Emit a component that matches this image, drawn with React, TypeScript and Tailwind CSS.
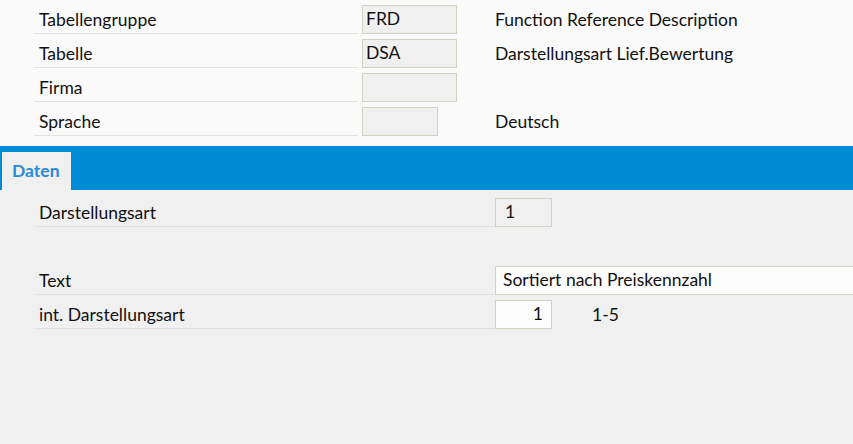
import React from "react"

const font = { fontFamily: "Lato, 'Open Sans', sans-serif" }

interface HeadRow {
  label: string
  value: string
  desc: string
  narrow?: boolean
}

const headRows: HeadRow[] = [
  { label: "Tabellengruppe", value: "FRD", desc: "Function Reference Description" },
  { label: "Tabelle", value: "DSA", desc: "Darstellungsart Lief.Bewertung" },
  { label: "Firma", value: "", desc: "" },
  { label: "Sprache", value: "", desc: "Deutsch", narrow: true },
]

function HeadLine({ row }: { row: HeadRow }) {
  return (
    <div className="flex h-[34px] items-stretch">
      <div className="w-[324px] border-b border-[#e2e2da] pl-[5px] flex items-center pt-[7px]">{row.label}</div>
      <div
        className={`ml-[4px] mt-[5px] h-[29px] border border-[#d2d2c2] bg-[#f0f0f0] pl-[3px] flex items-center ${
          row.narrow ? "w-[76px]" : "w-[95px]"
        }`}
      >
        {row.value}
      </div>
      <div className={`flex items-center pt-[6px] ${row.narrow ? "ml-[57px]" : "ml-[38px]"}`}>{row.desc}</div>
    </div>
  )
}

export default function App() {
  return (
    <div className="h-[444px] w-[853px] overflow-hidden bg-[#f0f0f0] text-[17.5px] text-[#111]" style={font}>
      {/* header fields */}
      <div className="bg-[#fafafa] pl-[34px] pb-[10px]">
        {headRows.map((r) => (
          <HeadLine key={r.label} row={r} />
        ))}
      </div>

      {/* tab strip */}
      <div className="h-[44px] bg-[#008bd5] flex items-end pl-[2px]">
        <div className="h-[38px] w-[69px] bg-[#f0f0f0] flex items-center pl-[10px] font-bold text-[#2a8ad8]">Daten</div>
      </div>

      {/* tab content */}
      <div className="pt-[3px] pl-[34px]">
        <div className="flex h-[34px]">
          <div className="w-[461px] border-b border-[#e2e2e2] pl-[5px] flex items-center pt-[8px]">Darstellungsart</div>
          <div className="mt-[5px] h-[29px] w-[57px] border border-[#d2d2c2] bg-[#f0f0f0] pl-[9px] flex items-center">1</div>
        </div>
        <div className="h-[34px]" />
        <div className="flex h-[34px]">
          <div className="w-[461px] border-b border-[#e2e2e2] pl-[5px] flex items-center pt-[8px]">Text</div>
          <div className="mt-[5px] h-[29px] flex-1 border border-r-0 border-[#d2d2c2] bg-[#fcfcfc] pl-[7px] flex items-center">
            Sortiert nach Preiskennzahl
          </div>
        </div>
        <div className="flex h-[34px]">
          <div className="w-[461px] border-b border-[#e2e2e2] pl-[5px] flex items-center pt-[8px]">int. Darstellungsart</div>
          <div className="mt-[5px] h-[29px] w-[57px] border border-[#d2d2c2] bg-[#fcfcfc] pr-[8px] flex items-center justify-end">1</div>
          <div className="ml-[40px] flex items-center pt-[7px]">1-5</div>
        </div>
      </div>
    </div>
  )
}
